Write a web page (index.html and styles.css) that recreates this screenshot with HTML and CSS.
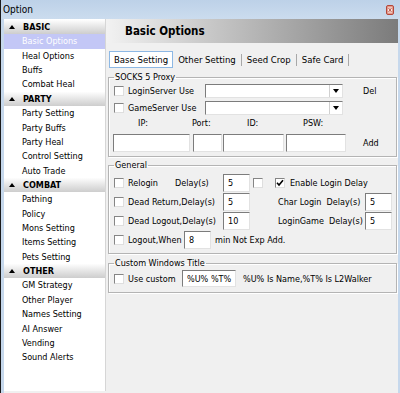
FILE: index.html
```html
<!DOCTYPE html>
<html lang="en">
<head>
  <meta charset="UTF-8">
  <title>Option</title>
  <link rel="stylesheet" href="styles.css">
</head>
<body>
<div class="window">
  <div class="titlebar">
    <span>Option</span>
    <svg class="close" width="8" height="10" viewBox="0 0 8 10">
      <rect x="0.5" y="0.5" width="7" height="9" rx="1.5" fill="#e49a8c" stroke="#b3473a"/>
      <rect x="2" y="2.5" width="4" height="5" fill="#fbe9e5"/>
      <path d="M2.5 3 L5.5 7 M5.5 3 L2.5 7" stroke="#b3473a" stroke-width="0.9"/>
    </svg>
  </div>
  <div class="client">
    <ul class="nav">
      <li class="group">BASIC</li>
      <li class="item selected">Basic Options</li>
      <li class="item">Heal Options</li>
      <li class="item">Buffs</li>
      <li class="item">Combat Heal</li>
      <li class="group">PARTY</li>
      <li class="item">Party Setting</li>
      <li class="item">Party Buffs</li>
      <li class="item">Party Heal</li>
      <li class="item">Control Setting</li>
      <li class="item">Auto Trade</li>
      <li class="group">COMBAT</li>
      <li class="item">Pathing</li>
      <li class="item">Policy</li>
      <li class="item">Mons Setting</li>
      <li class="item">Items Setting</li>
      <li class="item">Pets Setting</li>
      <li class="group">OTHER</li>
      <li class="item">GM Strategy</li>
      <li class="item">Other Player</li>
      <li class="item">Names Setting</li>
      <li class="item">AI Answer</li>
      <li class="item">Vending</li>
      <li class="item">Sound Alerts</li>
    </ul>

    <div class="panel">
      <div class="panel-head">Basic Options</div>

      <div class="tabs">
        <span class="tab active">Base Setting</span>
        <span class="tab">Other Setting</span>
        <span class="tab">Seed Crop</span>
        <span class="tab">Safe Card</span>
      </div>

      <fieldset class="box socks">
        <legend>SOCKS 5 Proxy</legend>
        <div class="row r1">
          <label class="lead w91"><span class="cb"></span><span class="txt">LoginServer Use</span></label>
          <div class="combo"><span class="btn"></span></div>
          <span class="act">Del</span>
        </div>
        <div class="row r2">
          <label class="lead w91"><span class="cb"></span><span class="txt">GameServer Use</span></label>
          <div class="combo"><span class="btn"></span></div>
        </div>
        <div class="row labels">
          <span class="l-ip">IP:</span>
          <span class="l-port">Port:</span>
          <span class="l-id">ID:</span>
          <span>PSW:</span>
        </div>
        <div class="row inputs">
          <input class="f-ip" type="text">
          <input class="f-port" type="text">
          <input class="f-id" type="text">
          <input class="f-psw" type="text">
          <span class="act add">Add</span>
        </div>
      </fieldset>

      <fieldset class="box general">
        <legend>General</legend>
        <div class="row g">
          <label class="lead w109"><span class="cb"></span><span class="txt relogin">Relogin</span><span>Delay(s)</span></label>
          <input class="num" type="text" value="5">
          <span class="cb small"></span>
          <label class="enable"><span class="cb on"><svg width="8" height="8" viewBox="0 0 8 8"><path d="M1 3.8 L3 6 L7 1.2" fill="none" stroke="#000" stroke-width="1.6"/></svg></span><span class="txt">Enable Login Delay</span></label>
        </div>
        <div class="row g">
          <label class="lead w109"><span class="cb"></span><span class="txt">Dead Return,Delay(s)</span></label>
          <input class="num" type="text" value="5">
          <span class="rlabel">Char Login&nbsp; Delay(s)</span>
          <input class="num" type="text" value="5">
        </div>
        <div class="row g">
          <label class="lead w109"><span class="cb"></span><span class="txt">Dead Logout,Delay(s)</span></label>
          <input class="num" type="text" value="10">
          <span class="rlabel">LoginGame&nbsp; Delay(s)</span>
          <input class="num" type="text" value="5">
        </div>
        <div class="row g">
          <label class="lead w70"><span class="cb"></span><span class="txt">Logout,When</span></label>
          <input class="num" type="text" value="8">
          <span class="after">min Not Exp Add.</span>
        </div>
      </fieldset>

      <fieldset class="box custom">
        <legend>Custom Windows Title</legend>
        <div class="row c">
          <label class="lead w68"><span class="cb"></span><span class="txt">Use custom</span></label>
          <input class="f-title" type="text" value="%U% %T%">
          <span class="hint">%U% Is Name,%T% Is L2Walker</span>
        </div>
      </fieldset>
    </div>
  </div>
</div>
</body>
</html>
```

FILE: styles.css
```css
* {
  box-sizing: border-box;
}
body {
  margin: 0;
  font-family: "DejaVu Sans Condensed", "Liberation Sans", sans-serif;
  font-size: 9px;
  color: #000;
  background: #f0f0f0;
}
.window {
  width: 400px;
  height: 393px;
  overflow: hidden;
  background: #c6d8ec;
  border-left: 1px solid #1c1c1c;
}
.titlebar {
  height: 19px;
  display: flex;
  align-items: center;
  justify-content: space-between;
  padding: 0 6px 0 2px;
  font-size: 10px;
  background: linear-gradient(#bdd1e8, #cbdcee);
}
.close {
  display: block;
}
.client {
  display: flex;
  height: 374px;
  margin: 0 2px 0 3px;
  background: #f0f0f0;
}

/* left menu */
.nav {
  width: 102px;
  height: 372px;
  margin: 0;
  padding: 1px 0 0;
  list-style: none;
  background: #fff;
  border-right: 1px solid #d6d6d6;
}
.nav li {
  height: 14.36px;
  line-height: 14.36px;
  white-space: nowrap;
}
.item {
  padding-left: 18px;
}
.item.selected {
  background: #c3c7f6;
  color: #fff;
}
.group {
  padding-left: 5px;
  font-weight: bold;
  background: linear-gradient(#fdfdfd, #cdcdcd);
}
.group::before {
  content: "";
  display: inline-block;
  vertical-align: 1px;
  margin-right: 8px;
  border-left: 3px solid transparent;
  border-right: 3px solid transparent;
  border-bottom: 4px solid #000;
}

/* right panel */
.panel {
  flex: 1;
  min-width: 0;
}
.panel-head {
  height: 24px;
  line-height: 24px;
  padding-left: 19px;
  font-size: 11.5px;
  font-weight: bold;
  background: linear-gradient(to right, #f2f2f2, #7b7b7b);
}
.tabs {
  display: flex;
  height: 17px;
  margin: 8px 0 0 3px;
  font-size: 9.5px;
}
.tab {
  display: flex;
  align-items: center;
  padding-left: 5px;
}
.tab::after {
  content: "";
  width: 1px;
  height: 12px;
  margin-left: 5px;
  background: #a8a8a8;
}
.tab.active {
  padding: 0 4px;
  background: #fff;
  border: 1px solid #8db8e4;
}
.tab.active::after {
  display: none;
}

.box {
  margin: 4px 1px 0 2px;
  padding: 1px 4px 4px 5px;
  min-width: 0;
  border: 1px solid #b4b4b4;
  box-shadow: inset 1px 1px 0 #fff, 1px 1px 0 #fff;
}
.box legend {
  padding: 0 1px;
  line-height: 11px;
}
.general {
  margin-top: 3px;
  padding-top: 3px;
}
.custom {
  padding-bottom: 5px;
}

.row {
  display: flex;
  align-items: center;
  white-space: nowrap;
}
.lead {
  display: flex;
  align-items: center;
  flex: none;
}
.w91 { width: 91px; }
.w109 { width: 109px; }
.w70 { width: 70px; }
.w68 { width: 68px; }
.txt {
  margin-left: 4px;
}
.relogin {
  width: 47px;
}

.cb {
  display: inline-flex;
  align-items: center;
  justify-content: center;
  flex: none;
  width: 10px;
  height: 10px;
  background: #fff;
  border: 1px solid;
  border-color: #858585 #dedede #dedede #858585;
}
.cb.small {
  margin-left: 3px;
}
.enable {
  display: flex;
  align-items: center;
  margin-left: 12px;
}
.enable .txt {
  margin-left: 5px;
}

input {
  font-family: inherit;
  font-size: 9px;
  color: #000;
  height: 18px;
  margin: 0;
  padding: 0 0 0 4px;
  background: #fff;
  border: 1px solid;
  border-color: #7c7c7c #e2e2e2 #e2e2e2 #7c7c7c;
  outline: none;
  flex: none;
}

/* socks */
.r1, .r2 {
  height: 14px;
}
.r2 {
  margin-top: 3px;
}
.combo {
  display: flex;
  justify-content: flex-end;
  width: 138px;
  height: 14px;
  background: #fff;
  border: 1px solid;
  border-color: #7c7c7c #e2e2e2 #e2e2e2 #7c7c7c;
}
.combo .btn {
  display: flex;
  align-items: center;
  justify-content: center;
  width: 13px;
  background: #fff;
  border-left: 1px solid #d0d0d0;
}
.combo .btn::after {
  content: "";
  border-left: 3px solid transparent;
  border-right: 3px solid transparent;
  border-top: 4px solid #000;
}
.act {
  margin-left: 20px;
}
.labels {
  height: 12px;
  margin-top: 2px;
  padding-left: 24px;
}
.l-ip { width: 54px; }
.l-port { width: 55px; }
.l-id { width: 56px; }
.inputs {
  margin: 5px 0 0 -1px;
}
.f-ip { width: 77px; }
.f-port { width: 29px; margin-left: 3px; }
.f-id { width: 61px; margin-left: 1px; }
.f-psw { width: 60px; margin-left: 2px; }
.act.add {
  margin-left: 17px;
}

/* general */
.g {
  height: 18px;
}
.g + .g {
  margin-top: 1px;
}
.num {
  width: 27px;
}
.rlabel {
  width: 87px;
  margin-left: 28px;
}
.after {
  margin-left: 4px;
}

/* custom title */
.c {
  height: 17px;
}
.f-title {
  width: 54px;
  height: 17px;
}
.hint {
  margin-left: 7px;
}
```
